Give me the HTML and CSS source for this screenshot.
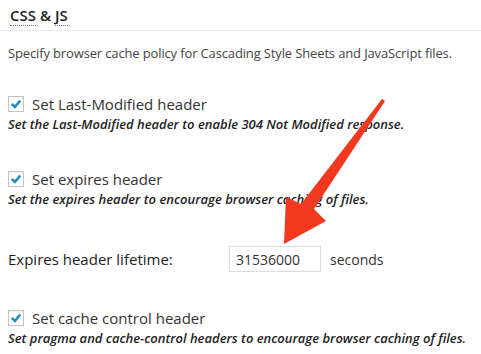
FILE: index.html
```html
<!DOCTYPE html>
<html lang="en">
<head>
    <meta charset="UTF-8">
    <title>CSS &amp; JS cache settings</title>
    <link rel="stylesheet" href="styles.css">
</head>
<body>
    <div class="page">
        <div class="section-head">
            <h3 class="section-title"><abbr title="Cascading Style Sheets">CSS</abbr> &amp; <abbr title="JavaScript">JS</abbr></h3>
        </div>

        <p class="intro">Specify browser cache policy for Cascading Style Sheets and JavaScript files.</p>

        <div class="option option-first">
            <label class="check">
                <span class="box"><svg viewBox="0 0 16 16" width="16" height="16"><path d="M3.8 8 L6.9 11 L12.2 4.6" /></svg></span>
                Set Last-Modified header
            </label>
            <p class="hint">Set the Last-Modified header to enable 304 Not Modified response.</p>
        </div>

        <div class="option option-second">
            <label class="check">
                <span class="box"><svg viewBox="0 0 16 16" width="16" height="16"><path d="M3.8 8 L6.9 11 L12.2 4.6" /></svg></span>
                Set expires header
            </label>
            <p class="hint">Set the expires header to encourage browser caching of files.</p>
        </div>

        <div class="field">
            <label class="field-label" for="lifetime">Expires header lifetime:</label>
            <input type="text" id="lifetime" class="field-input" value="31536000">
            <span class="field-unit">seconds</span>
        </div>

        <div class="option option-last">
            <label class="check">
                <span class="box"><svg viewBox="0 0 16 16" width="16" height="16"><path d="M3.8 8 L6.9 11 L12.2 4.6" /></svg></span>
                Set cache control header
            </label>
            <p class="hint">Set pragma and cache-control headers to encourage browser caching of files.</p>
        </div>

        <!-- annotation arrow drawn over the screenshot -->
        <svg class="arrow" width="481" height="354" viewBox="0 0 481 354">
            <polygon points="382,99 385,101 314,209 326,221 284,244 286,197 301,204" />
        </svg>
    </div>
</body>
</html>
```

FILE: styles.css
```css
body {
    margin: 0;
    background-color: #fff;
    font-family: "Open Sans", "Liberation Sans", sans-serif;
    color: #333;
}

.page {
    position: relative;
    width: 481px;
    height: 354px;
    overflow: hidden;
}

.section-head {
    height: 30px;
    border-bottom: 1px solid #e8e8e8;
}

.section-title {
    margin: 0;
    padding: 5px 0 0 10px;
    font-size: 15px;
    font-weight: 600;
    line-height: 20px;
    color: #222;
}

.section-title abbr {
    text-decoration: none;
    border-bottom: 1px dotted #777;
}

.intro {
    margin: 12px 0 0 8px;
    font-size: 13px;
    letter-spacing: -0.14px;
    line-height: 20px;
    color: #444;
}

.option {
    margin: 35px 0 0 8px;
}

.option-first {
    margin-top: 31px;
}

.option-last {
    margin-top: 36px;
}

.check {
    display: flex;
    align-items: center;
    gap: 8px;
    font-size: 15px;
    line-height: 20px;
    color: #333;
}

.box {
    width: 16px;
    height: 16px;
    box-sizing: border-box;
    border: 1px solid #c4c4c4;
    background-color: #fff;
    box-shadow: inset 0 1px 2px rgba(0, 0, 0, 0.07);
    display: flex;
}

.box svg {
    margin: -1px;
}

.box path {
    fill: none;
    stroke: #1e8cbe;
    stroke-width: 2.5;
}

.hint {
    margin: 0;
    font-size: 13px;
    font-style: italic;
    font-weight: 600;
    line-height: 20px;
    color: #222;
}

.field {
    display: flex;
    align-items: center;
    margin: 37px 0 0 8px;
    font-size: 15px;
    color: #333;
}

.field-label {
    width: 221px;
    font-weight: 500;
    color: #222;
}

.field-input {
    width: 92px;
    height: 26px;
    box-sizing: border-box;
    padding: 0 6px;
    border: 1px solid #ddd;
    font-family: inherit;
    font-size: 14px;
    color: #333;
}

.field-unit {
    margin-left: 9px;
    font-size: 14px;
}

.arrow {
    position: absolute;
    top: 0;
    left: 0;
}

.arrow polygon {
    fill: #f2381f;
}
```
